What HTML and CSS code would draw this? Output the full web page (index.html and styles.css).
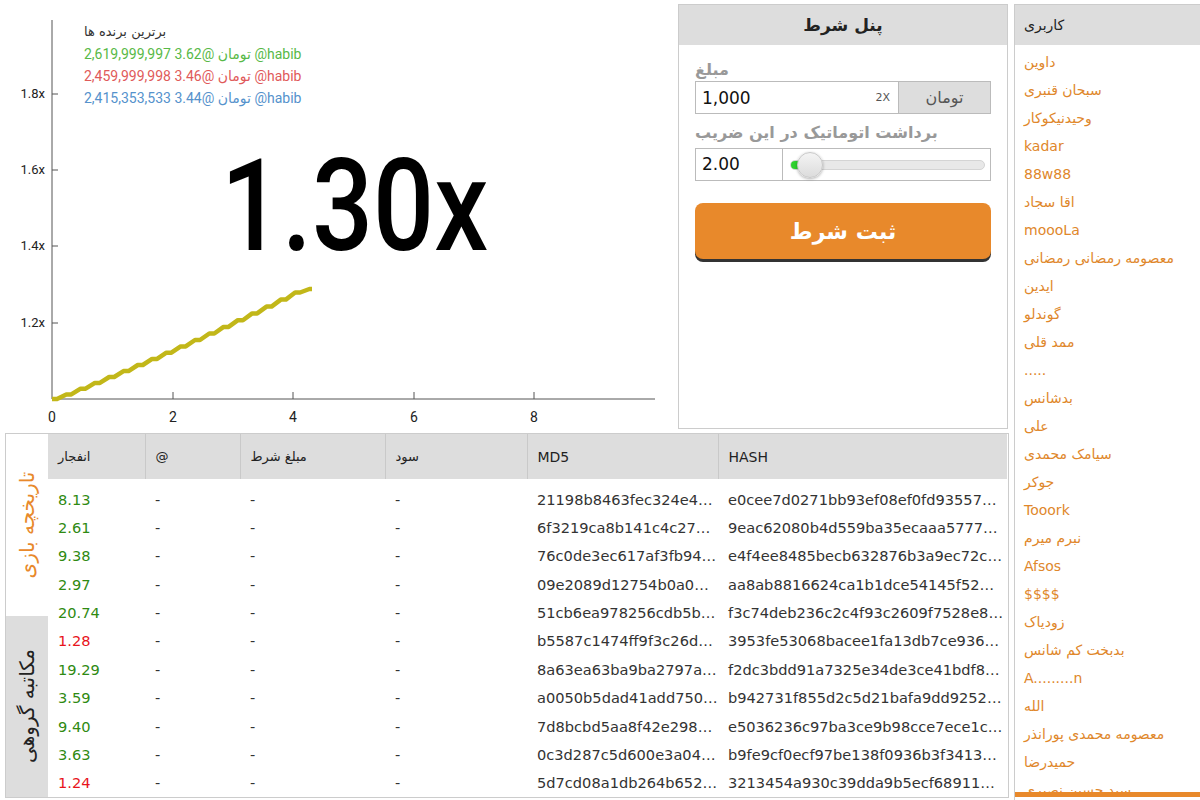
FILE: index.html
```html
<!DOCTYPE html>
<html lang="fa">
<head>
  <meta charset="UTF-8">
  <title>Crash Game</title>
  <link rel="stylesheet" href="styles.css">
</head>
<body>
  <div class="page">
    <div class="main">
      <div class="top">
        <div class="chart">
          <svg class="chart-svg" width="670" height="430" viewBox="0 0 670 430">
            <g class="axis">
              <line x1="52" y1="20" x2="52" y2="399"/>
              <line x1="52" y1="399" x2="655" y2="399"/>
              <line x1="52" y1="94" x2="58" y2="94"/>
              <line x1="52" y1="170" x2="58" y2="170"/>
              <line x1="52" y1="246" x2="58" y2="246"/>
              <line x1="52" y1="323" x2="58" y2="323"/>
              <line x1="173" y1="399" x2="173" y2="392"/>
              <line x1="293" y1="399" x2="293" y2="392"/>
              <line x1="414" y1="399" x2="414" y2="392"/>
              <line x1="534" y1="399" x2="534" y2="392"/>
            </g>
            <g class="y-labels">
              <text x="45" y="98">1.8x</text>
              <text x="45" y="174">1.6x</text>
              <text x="45" y="250">1.4x</text>
              <text x="45" y="327">1.2x</text>
            </g>
            <g class="x-labels">
              <text x="52" y="422">0</text>
              <text x="173" y="422">2</text>
              <text x="293" y="422">4</text>
              <text x="414" y="422">6</text>
              <text x="534" y="422">8</text>
            </g>
            <path class="curve" d="M52 399 L57 399 L66.3 394.4 L71.3 394.4 L80.6 388.7 L85.6 388.7 L94.9 382.9 L99.9 382.9 L109.2 377 L114.2 377 L123.5 371.1 L128.5 371.1 L137.8 365 L142.8 365 L152.1 358.9 L157.1 358.9 L166.4 352.7 L171.4 352.7 L180.7 346.4 L185.7 346.4 L195 340 L200 340 L209.3 333.5 L214.3 333.5 L223.6 326.9 L228.6 326.9 L237.9 320.2 L242.9 320.2 L252.2 313.4 L257.2 313.4 L266.5 306.6 L271.5 306.6 L280.8 299.6 L285.8 299.6 L295.1 292.5 L300.1 292.5 L309.4 289 L312 289"/>
          </svg>

          <div class="winners">
            <div class="winners-title">برترین برنده ها</div>
            <div class="winner green">2,619,999,997 3.62@ تومان @habib</div>
            <div class="winner red">2,459,999,998 3.46@ تومان @habib</div>
            <div class="winner blue">2,415,353,533 3.44@ تومان @habib</div>
          </div>

          <div class="multiplier">1.30x</div>
        </div>

        <div class="bet-panel">
          <div class="panel-head">پنل شرط</div>
          <div class="panel-body">
            <div class="field-label">مبلغ</div>
            <div class="amount-row">
              <div class="amount-input">
                <span class="amount">1,000</span>
                <span class="double">2X</span>
              </div>
              <div class="currency">تومان</div>
            </div>

            <div class="field-label second">برداشت اتوماتیک در این ضریب</div>
            <div class="auto-row">
              <div class="auto-input">2.00</div>
              <div class="slider">
                <div class="track">
                  <div class="fill"></div>
                  <div class="knob"></div>
                </div>
              </div>
            </div>

            <button class="bet-btn">ثبت شرط</button>
          </div>
        </div>
      </div>

      <div class="history">
        <div class="tabs">
          <div class="tab active"><span>تاریخچه بازی</span></div>
          <div class="tab"><span>مکاتبه گروهی</span></div>
        </div>
        <table class="games">
          <colgroup>
            <col style="width:97px">
            <col style="width:95px">
            <col style="width:145px">
            <col style="width:142px">
            <col style="width:191px">
            <col style="width:289px">
          </colgroup>
          <thead>
            <tr>
              <th>انفجار</th>
              <th>@</th>
              <th>مبلغ شرط</th>
              <th>سود</th>
              <th class="latin">MD5</th>
              <th class="latin">HASH</th>
            </tr>
          </thead>
          <tbody>
            <tr><td class="win">8.13</td><td>-</td><td>-</td><td>-</td><td>21198b8463fec324e4…</td><td>e0cee7d0271bb93ef08ef0fd93557…</td></tr>
            <tr><td class="win">2.61</td><td>-</td><td>-</td><td>-</td><td>6f3219ca8b141c4c27…</td><td>9eac62080b4d559ba35ecaaa5777…</td></tr>
            <tr><td class="win">9.38</td><td>-</td><td>-</td><td>-</td><td>76c0de3ec617af3fb94…</td><td>e4f4ee8485becb632876b3a9ec72c…</td></tr>
            <tr><td class="win">2.97</td><td>-</td><td>-</td><td>-</td><td>09e2089d12754b0a0…</td><td>aa8ab8816624ca1b1dce54145f52…</td></tr>
            <tr><td class="win">20.74</td><td>-</td><td>-</td><td>-</td><td>51cb6ea978256cdb5b…</td><td>f3c74deb236c2c4f93c2609f7528e8…</td></tr>
            <tr><td class="lose">1.28</td><td>-</td><td>-</td><td>-</td><td>b5587c1474ff9f3c26d…</td><td>3953fe53068bacee1fa13db7ce936…</td></tr>
            <tr><td class="win">19.29</td><td>-</td><td>-</td><td>-</td><td>8a63ea63ba9ba2797a…</td><td>f2dc3bdd91a7325e34de3ce41bdf8…</td></tr>
            <tr><td class="win">3.59</td><td>-</td><td>-</td><td>-</td><td>a0050b5dad41add750…</td><td>b942731f855d2c5d21bafa9dd9252…</td></tr>
            <tr><td class="win">9.40</td><td>-</td><td>-</td><td>-</td><td>7d8bcbd5aa8f42e298…</td><td>e5036236c97ba3ce9b98cce7ece1c…</td></tr>
            <tr><td class="win">3.63</td><td>-</td><td>-</td><td>-</td><td>0c3d287c5d600e3a04…</td><td>b9fe9cf0ecf97be138f0936b3f3413…</td></tr>
            <tr><td class="lose">1.24</td><td>-</td><td>-</td><td>-</td><td>5d7cd08a1db264b652…</td><td>3213454a930c39dda9b5ecf68911…</td></tr>
          </tbody>
        </table>
      </div>
    </div>

    <div class="users">
      <div class="users-head">کاربری</div>
      <ul class="user-list">
        <li>داوین</li>
        <li>سبحان قنبری</li>
        <li>وحیدنیکوکار</li>
        <li>kadar</li>
        <li>88w88</li>
        <li>اقا سجاد</li>
        <li>moooLa</li>
        <li>معصومه رمضانی رمضانی</li>
        <li>ایدین</li>
        <li>گوندلو</li>
        <li>ممد قلی</li>
        <li>.....</li>
        <li>بدشانس</li>
        <li>علی</li>
        <li>سیامک محمدی</li>
        <li>جوکر</li>
        <li>Tooork</li>
        <li>نبرم میرم</li>
        <li>Afsos</li>
        <li>$$$$</li>
        <li>زودیاک</li>
        <li>بدبخت کم شانس</li>
        <li>A.........n</li>
        <li>الله</li>
        <li>معصومه محمدی پورانذر</li>
        <li>حمیدرضا</li>
        <li>سید حسین نصیری</li>
      </ul>
      <div class="users-foot"></div>
    </div>
  </div>
</body>
</html>
```

FILE: styles.css
```css
* {
  box-sizing: border-box;
}

body {
  margin: 0;
  background: #fff;
  font-family: "DejaVu Sans", Verdana, sans-serif;
  color: #222;
  overflow: hidden;
}

.page {
  display: flex;
  width: 1200px;
  height: 800px;
}

.main {
  width: 1009px;
  flex: none;
}

.top {
  display: flex;
  height: 433px;
}

/* chart */

.chart {
  position: relative;
  width: 670px;
  height: 430px;
  flex: none;
}

.chart-svg {
  display: block;
}

.axis line {
  stroke: #555;
  stroke-width: 1;
}

.y-labels text,
.x-labels text {
  font-family: Roboto, "Liberation Sans", sans-serif;
  font-size: 13px;
  fill: #222;
}

.y-labels text {
  text-anchor: end;
}

.x-labels text {
  text-anchor: middle;
  font-size: 14px;
}

.curve {
  fill: none;
  stroke: #c2b719;
  stroke-width: 4.5;
  stroke-linejoin: round;
}

.winners {
  position: absolute;
  left: 84px;
  top: 21px;
  font-family: Roboto, "DejaVu Sans", sans-serif;
  font-size: 14px;
  line-height: 22px;
}

.winners-title {
  font-family: "DejaVu Sans", sans-serif;
  font-size: 13px;
  color: #333;
}

.winner.green { color: #58b947; }
.winner.red { color: #df5a5a; }
.winner.blue { color: #5592cc; }

.multiplier {
  position: absolute;
  left: 221px;
  top: 142px;
  font-family: Roboto, "DejaVu Sans", sans-serif;
  font-weight: 500;
  font-size: 128px;
  line-height: 1;
  color: #000;
  transform: scaleX(0.84);
  transform-origin: left top;
}

/* bet panel */

.bet-panel {
  width: 330px;
  height: 425px;
  margin: 4px 0 0 8px;
  border: 1px solid #ccc;
  flex: none;
}

.panel-head {
  height: 40px;
  line-height: 40px;
  background: #ddd;
  text-align: center;
  font-weight: bold;
  font-size: 17px;
  color: #222;
}

.panel-body {
  padding: 15px 16px;
}

.field-label {
  height: 21px;
  line-height: 20px;
  font-size: 16px;
  font-weight: bold;
  color: #999;
}

.field-label.second {
  margin-top: 9px;
  height: 25px;
}

.amount-row,
.auto-row {
  display: flex;
  height: 33px;
  border: 1px solid #bbb;
}

.amount-input {
  flex: 1;
  display: flex;
  align-items: center;
  justify-content: space-between;
  padding: 0 8px 0 6px;
  background: #fff;
}

.amount {
  font-size: 17px;
  color: #111;
}

.double {
  font-size: 11px;
  color: #555;
}

.currency {
  width: 92px;
  background: #ddd;
  border-left: 1px solid #bbb;
  text-align: center;
  line-height: 31px;
  font-size: 16px;
  color: #555;
}

.auto-input {
  width: 87px;
  border-right: 1px solid #bbb;
  padding-left: 6px;
  line-height: 31px;
  font-size: 17px;
  color: #111;
}

.slider {
  flex: 1;
  display: flex;
  align-items: center;
  padding: 0 5px 0 7px;
}

.track {
  position: relative;
  width: 100%;
  height: 10px;
  border: 1px solid #d4d4d4;
  border-radius: 5px;
  background: #e8e8e8;
}

.fill {
  width: 18px;
  height: 100%;
  border-radius: 5px 0 0 5px;
  background: #2fd12f;
}

.knob {
  position: absolute;
  left: 6px;
  top: -9px;
  width: 26px;
  height: 26px;
  border-radius: 50%;
  border: 1px solid #c8c8c8;
  background: linear-gradient(#f4f4f4, #dcdcdc);
  box-shadow: 0 1px 3px rgba(0, 0, 0, 0.3);
}

.bet-btn {
  display: block;
  width: 100%;
  height: 56px;
  margin-top: 22px;
  border: none;
  border-radius: 8px;
  background: #e8892b;
  box-shadow: 0 3px 0 #333;
  color: #fff;
  font-family: "DejaVu Sans", sans-serif;
  font-size: 22px;
  font-weight: bold;
}

/* history table */

.history {
  display: flex;
  width: 1004px;
  height: 365px;
  margin-left: 5px;
  border: 1px solid #ccc;
  overflow: hidden;
}

.tabs {
  width: 42px;
  flex: none;
  display: flex;
  flex-direction: column;
}

.tab {
  flex: 1;
  display: flex;
  align-items: center;
  justify-content: center;
  background: #ddd;
  color: #222;
  font-size: 20px;
}

.tab.active {
  background: #fff;
  color: #e8892b;
}

.tab span {
  white-space: nowrap;
  transform: rotate(-90deg);
}

.games {
  width: 959px;
  table-layout: fixed;
  border-collapse: collapse;
}

.games th {
  height: 45px;
  padding: 0 10px;
  background: #ddd;
  border-left: 1px solid #c9c9c9;
  text-align: left;
  font-weight: normal;
  font-size: 13px;
  color: #222;
}

.games th.latin {
  font-size: 14px;
}

.games th:first-child {
  border-left: none;
}

.games td {
  height: 28px;
  padding: 0 9px 0 10px;
  white-space: nowrap;
  overflow: hidden;
  font-size: 14.6px;
  color: #333;
}

.games tbody tr:first-child td {
  height: 34px;
  padding-top: 6px;
}

.games td.win { color: #2f8a12; }
.games td.lose { color: #e8141c; }

/* users */

.users {
  flex: 1;
  display: flex;
  flex-direction: column;
  height: 796px;
  margin: 4px 0 0 5px;
  border-left: 1px solid #ccc;
  border-top: 1px solid #ccc;
}

.users-head {
  height: 40px;
  line-height: 40px;
  padding-left: 9px;
  background: #ddd;
  font-size: 14px;
  color: #222;
}

.user-list {
  flex: 1;
  margin: 0;
  padding: 3px 0 0 9px;
  list-style: none;
  overflow: hidden;
}

.user-list li {
  height: 28px;
  line-height: 28px;
  font-size: 14px;
  color: #e0872b;
  white-space: nowrap;
}

.users-foot {
  height: 5px;
  margin-bottom: 3px;
  background: #e8892b;
}
```
